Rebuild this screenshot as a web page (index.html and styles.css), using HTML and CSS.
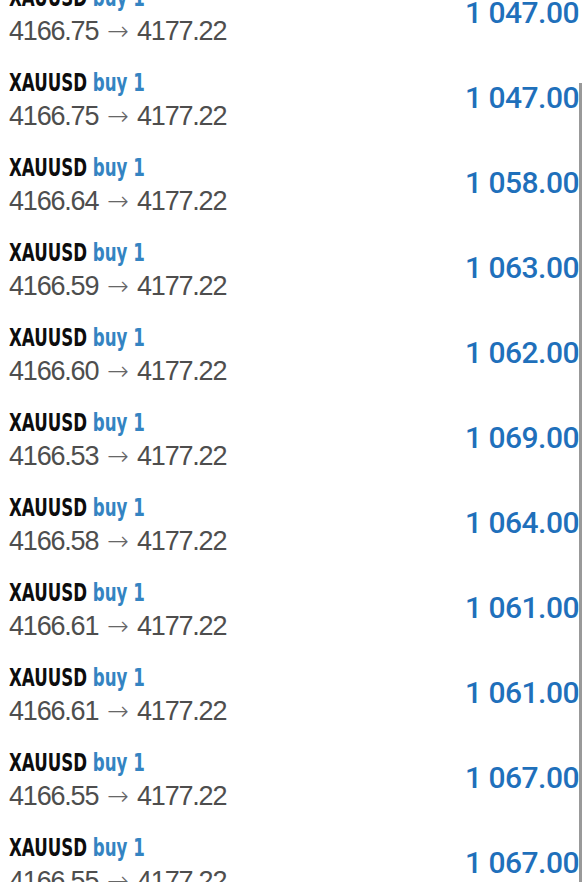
FILE: index.html
```html
<!DOCTYPE html>
<html lang="en">
<head>
  <meta charset="UTF-8">
  <title>Positions</title>
  <link rel="stylesheet" href="styles.css">
</head>
<body>
  <div class="scrollbar"></div>
  <div class="list">
    <div class="trade">
      <div class="info">
        <div class="title">XAUUSD <span class="side">buy 1</span></div>
        <div class="prices">4166.75<span class="arrow">→</span>4177.22</div>
      </div>
      <div class="profit">1 047.00</div>
    </div>
    <div class="trade">
      <div class="info">
        <div class="title">XAUUSD <span class="side">buy 1</span></div>
        <div class="prices">4166.75<span class="arrow">→</span>4177.22</div>
      </div>
      <div class="profit">1 047.00</div>
    </div>
    <div class="trade">
      <div class="info">
        <div class="title">XAUUSD <span class="side">buy 1</span></div>
        <div class="prices">4166.64<span class="arrow">→</span>4177.22</div>
      </div>
      <div class="profit">1 058.00</div>
    </div>
    <div class="trade">
      <div class="info">
        <div class="title">XAUUSD <span class="side">buy 1</span></div>
        <div class="prices">4166.59<span class="arrow">→</span>4177.22</div>
      </div>
      <div class="profit">1 063.00</div>
    </div>
    <div class="trade">
      <div class="info">
        <div class="title">XAUUSD <span class="side">buy 1</span></div>
        <div class="prices">4166.60<span class="arrow">→</span>4177.22</div>
      </div>
      <div class="profit">1 062.00</div>
    </div>
    <div class="trade">
      <div class="info">
        <div class="title">XAUUSD <span class="side">buy 1</span></div>
        <div class="prices">4166.53<span class="arrow">→</span>4177.22</div>
      </div>
      <div class="profit">1 069.00</div>
    </div>
    <div class="trade">
      <div class="info">
        <div class="title">XAUUSD <span class="side">buy 1</span></div>
        <div class="prices">4166.58<span class="arrow">→</span>4177.22</div>
      </div>
      <div class="profit">1 064.00</div>
    </div>
    <div class="trade">
      <div class="info">
        <div class="title">XAUUSD <span class="side">buy 1</span></div>
        <div class="prices">4166.61<span class="arrow">→</span>4177.22</div>
      </div>
      <div class="profit">1 061.00</div>
    </div>
    <div class="trade">
      <div class="info">
        <div class="title">XAUUSD <span class="side">buy 1</span></div>
        <div class="prices">4166.61<span class="arrow">→</span>4177.22</div>
      </div>
      <div class="profit">1 061.00</div>
    </div>
    <div class="trade">
      <div class="info">
        <div class="title">XAUUSD <span class="side">buy 1</span></div>
        <div class="prices">4166.55<span class="arrow">→</span>4177.22</div>
      </div>
      <div class="profit">1 067.00</div>
    </div>
    <div class="trade">
      <div class="info">
        <div class="title">XAUUSD <span class="side">buy 1</span></div>
        <div class="prices">4166.55<span class="arrow">→</span>4177.22</div>
      </div>
      <div class="profit">1 067.00</div>
    </div>
  </div>
</body>
</html>
```

FILE: styles.css
```css
body {
  margin: 0;
  padding: 0;
  height: 882px;
  overflow: hidden;
  background: #fff;
  position: relative;
}

/* list is scrolled a bit, first row is cut */
.list {
  margin-top: -27px;
}

.trade {
  display: flex;
  justify-content: space-between;
  height: 85px;
  box-sizing: border-box;
  padding: 9px 9px 10px 9px;
}

/* the app uses a condensed face, squeeze DejaVu Condensed to match */
.title {
  font-family: "DejaVu Sans Condensed", sans-serif;
  font-weight: bold;
  font-size: 25px;
  line-height: 32px;
  color: #0d0d0d;
  white-space: nowrap;
  transform: scaleX(0.74);
  transform-origin: left center;
}

.side {
  color: #3484c2;
}

.prices {
  font-family: "Liberation Sans", Arial, sans-serif;
  font-size: 27px;
  line-height: 34px;
  letter-spacing: -1.2px;
  color: #4e4e4e;
  white-space: nowrap;
}

.arrow {
  display: inline-block;
  margin: 0 8px 0 9px;
  font-family: "DejaVu Sans", sans-serif;
  font-weight: 200;
  font-size: 26px;
  letter-spacing: 0;
  color: #666;
}

.profit {
  align-self: center;
  padding-bottom: 6px;
  font-family: Roboto, sans-serif;
  font-weight: 500;
  font-size: 30px;
  letter-spacing: -0.5px;
  color: #1f70bb;
}

.scrollbar {
  position: absolute;
  top: 83px;
  bottom: 0;
  right: 6px;
  width: 3px;
  background: #999;
}
```
